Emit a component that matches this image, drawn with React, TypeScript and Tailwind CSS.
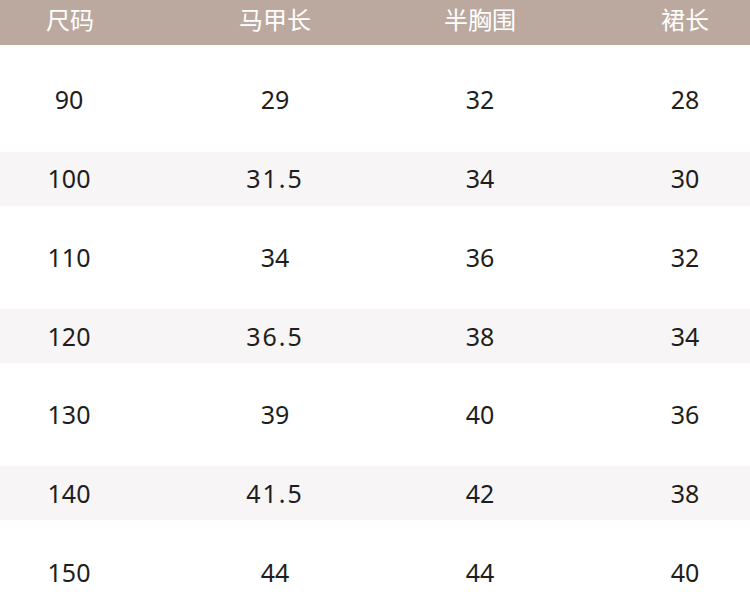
import React from 'react';

const headers = ['尺码', '马甲长', '半胸围', '裙长'];

const rows: string[][] = [
  ['90', '29', '32', '28'],
  ['100', '31.5', '34', '30'],
  ['110', '34', '36', '32'],
  ['120', '36.5', '38', '34'],
  ['130', '39', '40', '36'],
  ['140', '41.5', '42', '38'],
  ['150', '44', '44', '40'],
];

// column widths chosen so cell centers land at 70 / 275 / 480 / 685
const cols = 'grid grid-cols-[140px_270px_140px_270px] w-[820px]';

export default function App() {
  return (
    <div
      className="w-[750px] h-[598px] overflow-hidden bg-white"
      style={{ fontFamily: '"Noto Sans", "Noto Sans CJK SC", sans-serif' }}
    >
      {/* Header */}
      <div className="h-[45px] bg-[#bba99f] overflow-hidden">
        <div className={`${cols} h-full items-center pb-[5px]`}>
          {headers.map((h) => (
            <div key={h} className="text-center text-[24px] text-white leading-none">
              {h}
            </div>
          ))}
        </div>
      </div>

      {/* Rows */}
      <div className="pt-[15.6px]">
        {rows.map((r, i) => (
          <div key={r[0]} className="h-[78.7px] flex items-center">
            <div
              className={`${cols} h-[54px] items-center ${
                i % 2 === 1 ? 'bg-[#f7f5f5]' : ''
              }`}
            >
              {r.map((v, j) => (
                <div
                  key={j}
                  className={`text-center text-[25px] text-[#1e1e1e] leading-none ${
                    v.includes('.') ? 'tracking-[2px]' : ''
                  } ${j === 0 ? 'pr-[2px]' : ''}`}
                >
                  {v}
                </div>
              ))}
            </div>
          </div>
        ))}
      </div>
    </div>
  );
}
